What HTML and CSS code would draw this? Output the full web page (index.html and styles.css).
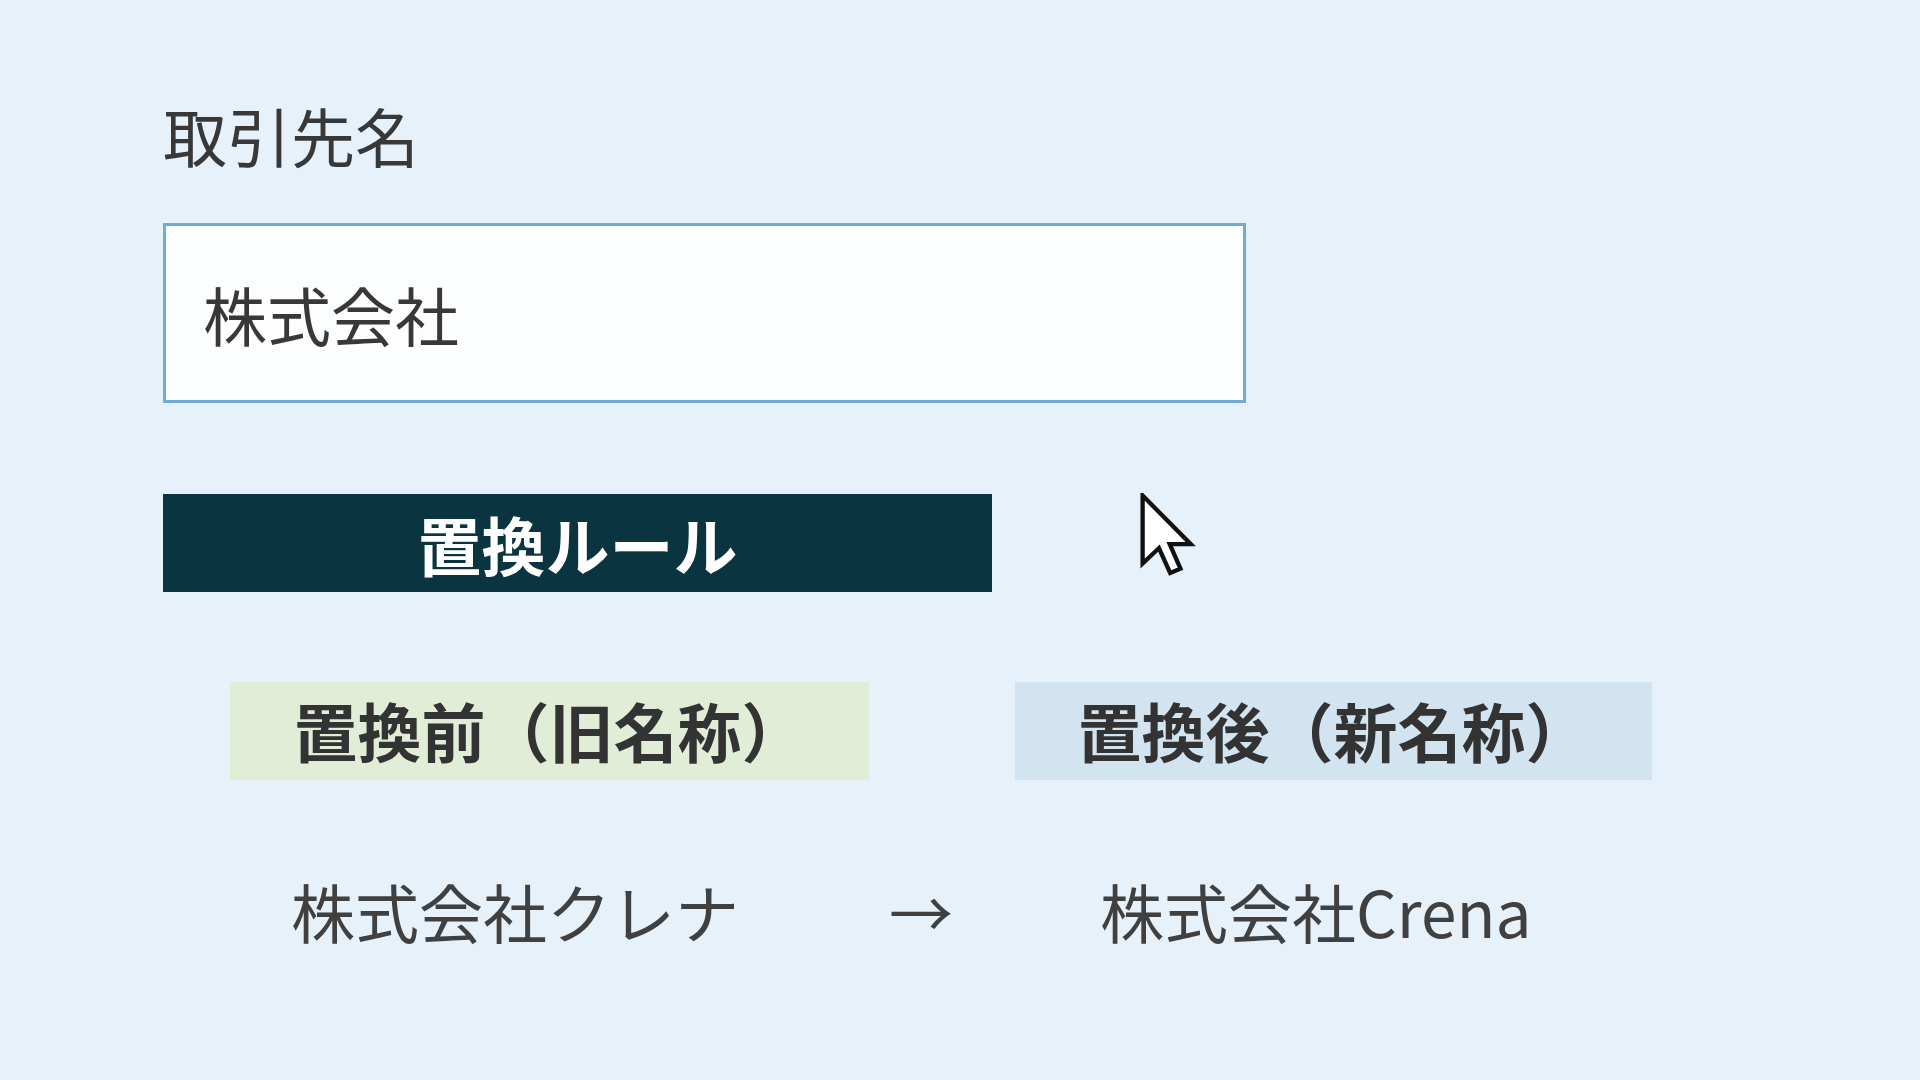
FILE: index.html
```html
<!DOCTYPE html>
<html lang="ja">
<head>
<meta charset="utf-8">
<title>置換ルール</title>
<link rel="stylesheet" href="styles.css">
</head>
<body>
<div class="page">
  <div class="label">取引先名</div>
  <div class="input">株式会社</div>
  <div class="bar">置換ルール</div>
  <div class="rules">
    <div class="head head-old">置換前（旧名称）</div>
    <div class="gap"></div>
    <div class="head head-new">置換後（新名称）</div>
    <div class="cell cell-old">株式会社クレナ</div>
    <div class="cell cell-arrow">→</div>
    <div class="cell cell-new">株式会社Crena</div>
  </div>
</div>
<svg class="cursor" width="56" height="86" viewBox="0 0 13 20" xmlns="http://www.w3.org/2000/svg">
  <path d="M0.6 0.6 L0.6 16.4 L4.4 12.8 L7.0 18.6 L9.4 17.6 L6.9 11.9 L11.8 11.9 Z" fill="#ffffff" stroke="#111111" stroke-width="1" stroke-linejoin="miter"/>
</svg>
</body>
</html>
```
FILE: styles.css
```css
html, body {
  margin: 0;
  padding: 0;
}
body {
  width: 1920px;
  height: 1080px;
  overflow: hidden;
  background: #e7f1fa;
  font-family: "Noto Sans CJK JP", "Noto Sans", sans-serif;
  color: #333333;
  position: relative;
}
.page {
  padding: 102px 0 0 163px;
}
.label {
  font-size: 64px;
  line-height: 64px;
  color: #383838;
}
.input {
  margin-top: 57px;
  width: 1083px;
  height: 180px;
  box-sizing: border-box;
  border: 3px solid #6fabd2;
  background: #fbfdfe;
  display: flex;
  align-items: center;
  padding-left: 37px;
  font-size: 64px;
  line-height: 64px;
  color: #383838;
}
.bar {
  margin-top: 91px;
  width: 829px;
  height: 98px;
  background: #0a3440;
  color: #ffffff;
  font-weight: bold;
  font-size: 64px;
  line-height: 98px;
  text-align: center;
}
.rules {
  margin-top: 90px;
  margin-left: 67px;
  display: grid;
  grid-template-columns: 639px 146px 637px;
  grid-template-rows: 98px 64px;
  row-gap: 98px;
}
.head {
  font-size: 64px;
  line-height: 94px;
  font-weight: bold;
  text-align: center;
  color: #333333;
  white-space: nowrap;
}
.head-old {
  background: #e1edd6;
}
.head-new {
  background: #d3e4f1;
}
.cell {
  font-size: 64px;
  line-height: 64px;
  color: #404040;
  white-space: nowrap;
}
.cell-old {
  padding-left: 61px;
}
.cell-arrow {
  padding-left: 20px;
}
.cell-new {
  padding-left: 85px;
}
.cursor {
  position: absolute;
  left: 1140px;
  top: 493px;
}
```
